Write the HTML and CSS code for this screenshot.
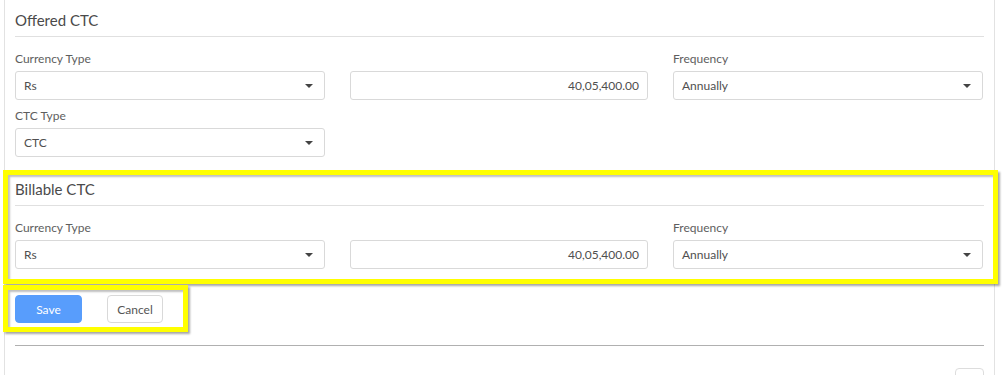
FILE: index.html
```html
<!DOCTYPE html>
<html>
<head>
<meta charset="utf-8">
<link rel="stylesheet" href="styles.css">
</head>
<body>
<div class="panel">
  <section class="group">
    <h3 class="group-title">Offered CTC</h3>
    <div class="grid">
      <div class="field">
        <label class="label">Currency Type</label>
        <div class="select"><span>Rs</span><span class="caret"></span></div>
      </div>
      <div class="field">
        <div class="label-space"></div>
        <div class="input">40,05,400.00</div>
      </div>
      <div class="field">
        <label class="label">Frequency</label>
        <div class="select"><span>Annually</span><span class="caret"></span></div>
      </div>
      <div class="field">
        <label class="label">CTC Type</label>
        <div class="select"><span>CTC</span><span class="caret"></span></div>
      </div>
    </div>
  </section>

  <section class="group billable">
    <h3 class="group-title">Billable CTC</h3>
    <div class="grid">
      <div class="field">
        <label class="label">Currency Type</label>
        <div class="select"><span>Rs</span><span class="caret"></span></div>
      </div>
      <div class="field">
        <div class="label-space"></div>
        <div class="input">40,05,400.00</div>
      </div>
      <div class="field">
        <label class="label">Frequency</label>
        <div class="select"><span>Annually</span><span class="caret"></span></div>
      </div>
    </div>
  </section>

  <div class="actions">
    <button class="btn btn-primary">Save</button>
    <button class="btn btn-default">Cancel</button>
  </div>

  <hr class="divider">
  <div class="bottom-row"><div class="mini-box"></div></div>
</div>
</body>
</html>
```

FILE: styles.css
```css
* { box-sizing: border-box; }
html, body { margin: 0; padding: 0; background: #fff; }
body {
  font-family: Lato, "Noto Sans", sans-serif;
  color: #4a4a4a;
  font-size: 12px;
  overflow: hidden;
  height: 375px;
}
.panel {
  margin-left: 4px;
  width: 991px;
  min-height: 375px;
  border-left: 1px solid #e2e2e2;
  border-right: 1px solid #e2e2e2;
  padding: 10px 10px 0 10px;
}
.group-title {
  margin: 0;
  font-size: 15px;
  font-weight: 400;
  line-height: 20px;
  color: #4a4a4a;
  padding-bottom: 6px;
  border-bottom: 1px solid #e0e0e0;
}
.grid {
  display: grid;
  grid-template-columns: 310px 298px 310px;
  column-gap: 25px;
  row-gap: 8px;
  padding-top: 14px;
}
.label, .label-space {
  display: block;
  height: 16px;
  line-height: 16px;
  margin-bottom: 4px;
  color: #5e5e5e;
  font-size: 12px;
}
.select, .input {
  height: 29px;
  border: 1px solid #d9d9d9;
  border-radius: 3px;
  display: flex;
  align-items: center;
  padding: 0 8px;
  font-size: 12px;
  color: #4f4f4f;
  background: #fff;
}
.select { justify-content: space-between; padding-right: 11px; }
.input { justify-content: flex-end; }
.caret {
  width: 0; height: 0;
  border-left: 4px solid transparent;
  border-right: 4px solid transparent;
  border-top: 4px solid #444;
}
.billable {
  position: relative;
  margin-top: 22px;
}
.billable::before {
  content: "";
  position: absolute;
  left: -12px; right: -14px; top: -9px; bottom: -15px;
  border: 5px solid #ffff00;
  box-shadow: 2px 2px 2px rgba(0,0,0,0.35), inset 2px 2px 2px rgba(0,0,0,0.25);
  pointer-events: none;
}
.actions {
  position: relative;
  margin-top: 26px;
  display: inline-flex;
  gap: 25px;
}
.actions::before {
  content: "";
  position: absolute;
  left: -12px; right: -25px; top: -10px; bottom: -9px;
  border: 5px solid #ffff00;
  box-shadow: 2px 2px 2px rgba(0,0,0,0.35), inset 2px 2px 2px rgba(0,0,0,0.25);
  pointer-events: none;
}
.btn {
  height: 28px;
  border-radius: 4px;
  font-family: inherit;
  font-size: 12px;
  padding: 0;
  cursor: pointer;
}
.btn-primary {
  width: 67px;
  background: #589dfc;
  border: 1px solid #589dfc;
  color: #fff;
}
.btn-default {
  width: 56px;
  background: #fff;
  border: 1px solid #d9d9d9;
  color: #555;
}
.divider {
  margin: 22px 0 0 0;
  border: 0;
  border-top: 1px solid #b0b0b0;
  width: 969px;
}
.bottom-row {
  display: flex;
  justify-content: flex-end;
  padding-top: 22px;
  padding-right: 0;
}
.mini-box {
  width: 29px;
  height: 20px;
  border: 1px solid #ddd;
  border-radius: 4px;
}
```
